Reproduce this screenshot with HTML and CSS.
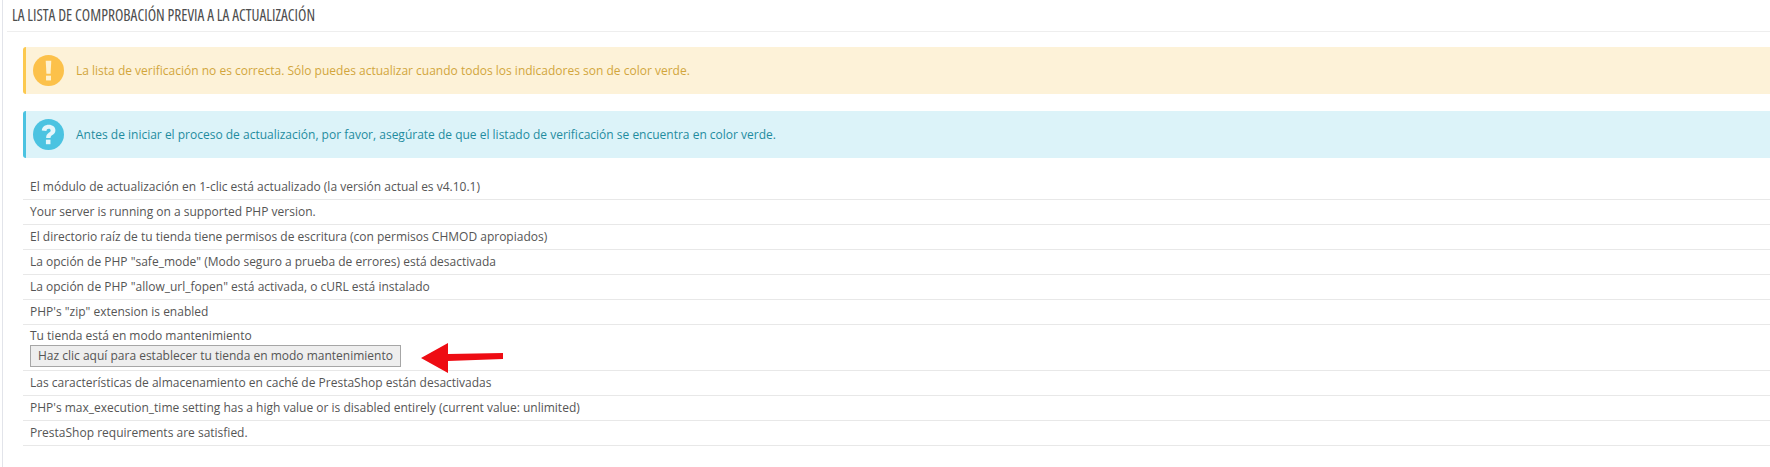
FILE: index.html
```html
<!DOCTYPE html>
<html lang="es">
<head>
<meta charset="utf-8">
<title>Lista de comprobación</title>
<link rel="stylesheet" href="styles.css">
</head>
<body>
<section class="panel">
  <h3 class="panel-heading">La lista de comprobación previa a la actualización</h3>
  <div class="panel-body">
    <div class="alert alert-warning">
      <svg class="alert-icon" viewBox="0 0 30 30" aria-hidden="true">
        <circle cx="15" cy="15" r="15" fill="#fcc14a"/>
        <path d="M12.3 5.500h5.400l-.7 12.600h-4z" fill="#fff2cf"/>
        <rect x="12.600" y="20" width="4.800" height="4.600" fill="#fff2cf"/>
      </svg>
      <p>La lista de verificación no es correcta. Sólo puedes actualizar cuando todos los indicadores son de color verde.</p>
    </div>
    <div class="alert alert-info">
      <svg class="alert-icon" viewBox="0 0 30 30" aria-hidden="true">
        <circle cx="15" cy="15" r="15" fill="#4bc3e1"/>
        <path d="M8.500 11.200c.3-3.700 3.200-5.700 6.700-5.700 3.800 0 6.500 2.200 6.500 5.300 0 2.500-1.400 3.700-2.900 4.700-1.200.8-1.800 1.300-1.800 2.800h-4.300c0-2.900 1-4 2.600-5.100 1.100-.7 1.800-1.200 1.800-2.100 0-1-.7-1.600-1.900-1.600-1.300 0-2.100.8-2.200 2.100z" fill="#e4f6fb"/>
        <rect x="12.500" y="20" width="4.400" height="4.400" fill="#e4f6fb"/>
      </svg>
      <p>Antes de iniciar el proceso de actualización, por favor, asegúrate de que el listado de verificación se encuentra en color verde.</p>
    </div>
    <ul class="checklist">
      <li>El módulo de actualización en 1-clic está actualizado (la versión actual es v4.10.1)</li>
      <li>Your server is running on a supported PHP version.</li>
      <li>El directorio raíz de tu tienda tiene permisos de escritura (con permisos CHMOD apropiados)</li>
      <li>La opción de PHP "safe_mode" (Modo seguro a prueba de errores) está desactivada</li>
      <li>La opción de PHP "allow_url_fopen" está activada, o cURL está instalado</li>
      <li>PHP's "zip" extension is enabled</li>
      <li class="with-action">
        Tu tienda está en modo mantenimiento
        <div class="action-row">
          <a class="button" href="#">Haz clic aquí para establecer tu tienda en modo mantenimiento</a>
          <svg class="arrow" viewBox="0 0 82 30" aria-hidden="true">
            <path d="M0 15 27 0 27 11 82 10 82 16 27 18 27 30z" fill="#ee0c13"/>
          </svg>
        </div>
      </li>
      <li>Las características de almacenamiento en caché de PrestaShop están desactivadas</li>
      <li>PHP's max_execution_time setting has a high value or is disabled entirely (current value: unlimited)</li>
      <li>PrestaShop requirements are satisfied.</li>
    </ul>
  </div>
</section>
</body>
</html>
```

FILE: styles.css
```css
* { box-sizing: border-box; }
html, body { margin: 0; padding: 0; height: 100%; overflow: hidden; }
body {
  background: #fff;
  font-family: "Open Sans", "Liberation Sans", sans-serif;
  font-size: 12px;
  color: #555;
}
.panel {
  margin-left: 2px;
  height: 467px;
  border-left: 1px solid #e2e4ea;
  background: #fff;
}
.panel-heading {
  margin: 0 0 0 4px;
  height: 32px;
  padding: 7px 0 0 5px;
  border-bottom: 1px solid #eeeeee;
  font-size: 15.4px;
  line-height: 18px;
  font-weight: 400;
  font-stretch: condensed;
  text-transform: uppercase;
  white-space: nowrap;
  color: #4d4d4d;
  overflow: hidden;
}
.panel-body { padding: 15px 0 0 20px; }
.alert {
  display: flex;
  align-items: center;
  gap: 12px;
  height: 47px;
  margin-bottom: 17px;
  padding-left: 7px;
  border-left: 3px solid;
  border-radius: 3px 0 0 3px;
}
.alert p { margin: 0; font-size: 12px; }
.alert-icon { width: 31px; height: 31px; flex: none; }
.alert-warning { background: #fdf2d8; border-color: #fcc94f; color: #d2a63c; }
.alert-info { background: #dcf3f9; border-color: #4bc3e1; color: #1f8c9f; }
.checklist { list-style: none; margin: 0; padding: 0; }
.checklist li {
  min-height: 25px;
  padding: 3px 7px 0;
  border-bottom: 1px solid #e8e8e8;
  line-height: 18px;
  color: #555;
}
.checklist .with-action {
  height: 46px;
  padding-top: 2px;
}
.action-row { display: flex; align-items: flex-start; }
.button {
  display: block;
  width: 371px;
  height: 22px;
  border: 1px solid #a6a6a6;
  background: #eeeeee;
  color: #555;
  text-decoration: none;
  text-align: center;
  line-height: 20px;
  font-size: 12px;
}
.arrow { width: 82px; height: 30px; margin: -2px 0 0 20px; flex: none; }
```
